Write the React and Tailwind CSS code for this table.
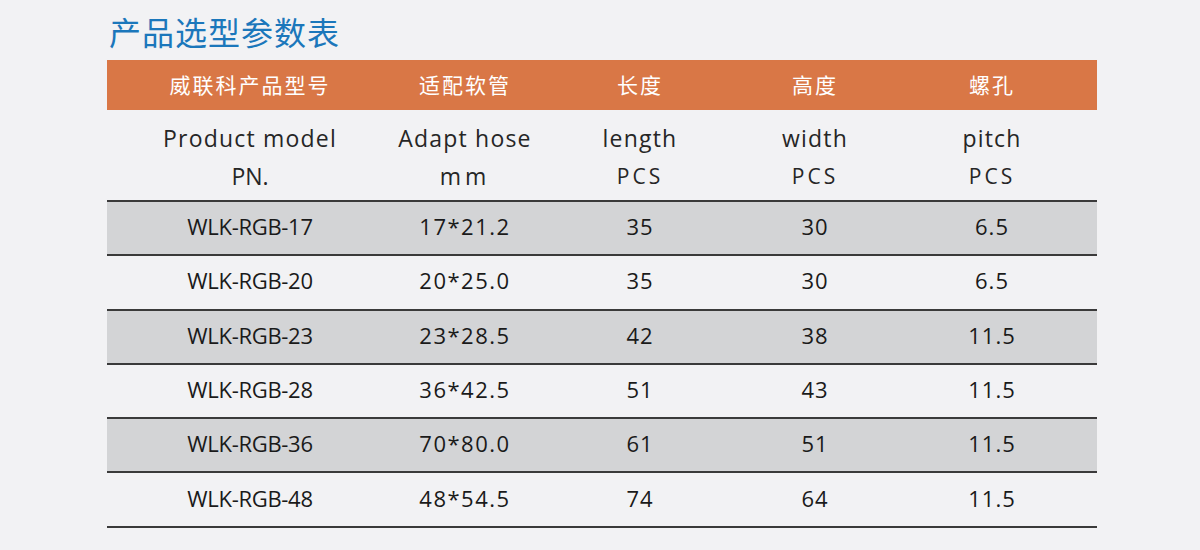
import React from "react";

const rows = [
  ["WLK-RGB-17", "17*21.2", "35", "30", "6.5"],
  ["WLK-RGB-20", "20*25.0", "35", "30", "6.5"],
  ["WLK-RGB-23", "23*28.5", "42", "38", "11.5"],
  ["WLK-RGB-28", "36*42.5", "51", "43", "11.5"],
  ["WLK-RGB-36", "70*80.0", "61", "51", "11.5"],
  ["WLK-RGB-48", "48*54.5", "74", "64", "11.5"],
];

const cols = "grid grid-cols-[286px_144px_206px_144px_210px]";

export default function App() {
  return (
    <div className="w-[1200px] h-[550px] bg-[#f2f2f4] overflow-hidden" style={{ fontFamily: '"Open Sans", "Noto Sans CJK SC", sans-serif' }}>
      <div className="pl-[109px] pt-[12px] h-[60px]">
        <h1 className="text-[32px] leading-[38px] text-[#1b77bb] tracking-[1px]" style={{ fontFamily: '"Noto Sans CJK SC", sans-serif' }}>产品选型参数表</h1>
      </div>
      <div className="ml-[107px] w-[990px]">
        <div className={`${cols} h-[50px] bg-[#d97746] items-center text-white text-[21px] tracking-[2px]`} style={{ fontFamily: '"Noto Sans CJK SC", sans-serif' }}>
          <div className="text-center">威联科产品型号</div>
          <div className="text-center">适配软管</div>
          <div className="text-center">长度</div>
          <div className="text-center">高度</div>
          <div className="text-center">螺孔</div>
        </div>
        <div className={`${cols} h-[92px] border-b-2 border-[#3a3a3a] pt-[9px] text-[23px] leading-[38px] text-[#262626]`}>
          <div className="text-center">
            <div className="tracking-[1.2px]">Product model</div>
            <div>PN.</div>
          </div>
          <div className="text-center">
            <div className="tracking-[1.2px]">Adapt hose</div>
            <div className="tracking-[4px]">mm</div>
          </div>
          <div className="text-center">
            <div className="tracking-[1.2px]">length</div>
            <div className="tracking-[3px] text-[21px]">PCS</div>
          </div>
          <div className="text-center">
            <div className="tracking-[1.2px]">width</div>
            <div className="tracking-[3px] text-[21px]">PCS</div>
          </div>
          <div className="text-center">
            <div className="tracking-[1.2px]">pitch</div>
            <div className="tracking-[3px] text-[21px]">PCS</div>
          </div>
        </div>
        {rows.map((r, i) => (
          <div
            key={r[0]}
            className={`${cols} h-[54.3px] border-b-2 border-[#3a3a3a] items-center pb-[3px] text-[22px] text-[#1a1a1a] ${i % 2 === 0 ? "bg-[#d3d4d6]" : ""}`}
          >
            <div className="text-center tracking-[-0.3px]">{r[0]}</div>
            <div className="text-center tracking-[1.5px]">{r[1]}</div>
            <div className="text-center tracking-[1px]">{r[2]}</div>
            <div className="text-center tracking-[1px]">{r[3]}</div>
            <div className="text-center tracking-[1px]">{r[4]}</div>
          </div>
        ))}
      </div>
    </div>
  );
}
